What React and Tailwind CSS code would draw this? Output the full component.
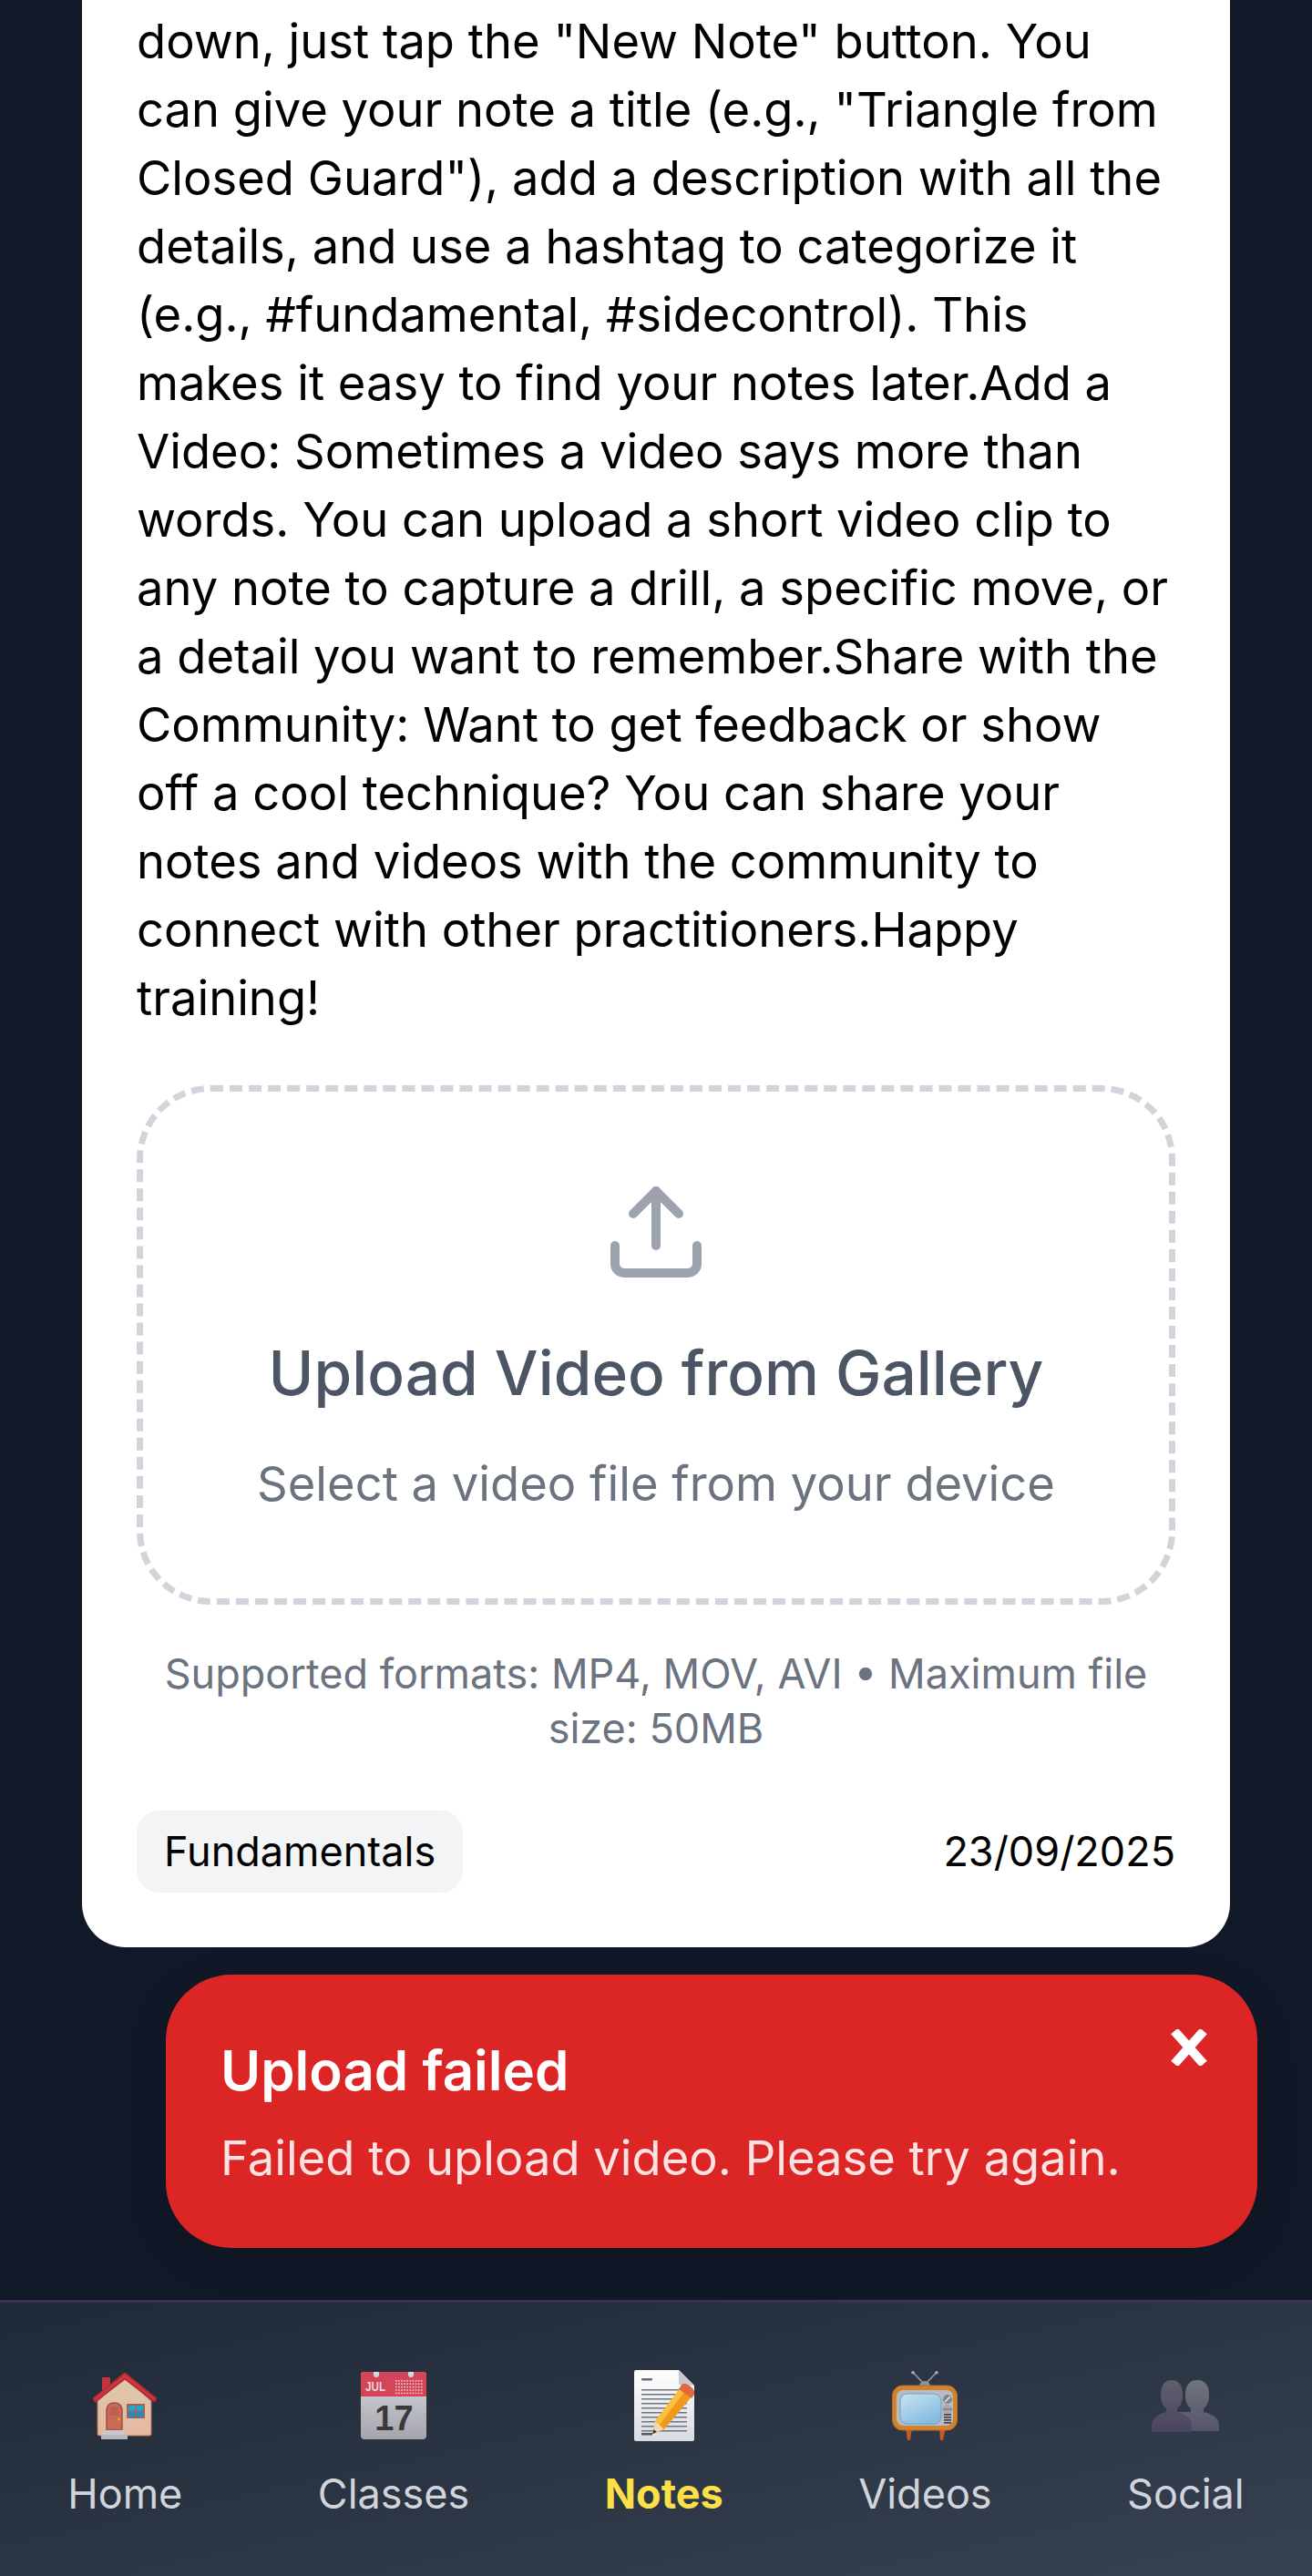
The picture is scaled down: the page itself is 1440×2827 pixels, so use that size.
const bodyText = `down, just tap the "New Note" button. You can give your note a title (e.g., "Triangle from Closed Guard"), add a description with all the details, and use a hashtag to categorize it (e.g., #fundamental, #sidecontrol). This makes it easy to find your notes later.Add a Video: Sometimes a video says more than words. You can upload a short video clip to any note to capture a drill, a specific move, or a detail you want to remember.Share with the Community: Want to get feedback or show off a cool technique? You can share your notes and videos with the community to connect with other practitioners.Happy training!`

function HomeIcon() {
  return (
    <svg viewBox="0 0 72 74" className="h-[74px] w-[72px]">
      <defs>
        <linearGradient id="houseWall" x1="0" y1="0" x2="0" y2="1">
          <stop offset="0" stopColor="#dcc9ae" />
          <stop offset="1" stopColor="#e6b8a0" />
        </linearGradient>
      </defs>
      <rect x="11" y="6" width="9" height="16" fill="#c4343e" />
      <path d="M6 32 L36 6 L65 32 V68 Q65 70 63 70 H8 Q6 70 6 68Z" fill="url(#houseWall)" stroke="#b5704f" strokeWidth="1" />
      <path d="M2 29 L36 1.5 L70 29 L68.5 32.5 L36 7.5 L3.5 32.5Z" fill="#cf3a42" stroke="#b92a33" strokeWidth="2" strokeLinejoin="round" />
      <path d="M16 64 V43 Q16 34 24.5 34 Q33 34 33 43 V64Z" fill="#c86a58" stroke="#a34e42" strokeWidth="1.5" />
      <path d="M19.5 48 V43 Q19.5 38 24.5 38 Q29.5 38 29.5 43 V48Z" fill="#bd5e4f" />
      <circle cx="29.5" cy="52" r="1.7" fill="#e6a020" />
      <rect x="38" y="35" width="20" height="16" fill="#a0635c" />
      <rect x="40" y="37" width="7.5" height="5.5" fill="#1ea8d4" />
      <rect x="49" y="37" width="7" height="5.5" fill="#1ea8d4" />
      <rect x="40" y="44" width="7.5" height="5.5" fill="#1a8fc4" />
      <rect x="49" y="44" width="7" height="5.5" fill="#1a8fc4" />
      <rect x="12" y="64" width="24" height="5" fill="#c8c8cc" />
      <rect x="10" y="69" width="29" height="5" fill="#b8b8be" />
    </svg>
  )
}

function CalendarIcon() {
  return (
    <svg viewBox="0 0 72 74" className="h-[74px] w-[72px]">
      <defs>
        <linearGradient id="calBody" x1="0" y1="0" x2="0" y2="1">
          <stop offset="0" stopColor="#d8d8dc" />
          <stop offset="1" stopColor="#a3a4ad" />
        </linearGradient>
      </defs>
      <rect x="0" y="0" width="72" height="74" rx="4" fill="url(#calBody)" />
      <path d="M0 27 V4 Q0 0 4 0 H14 V3 Q14 6 17 6 Q20 6 20 3 V0 H52 V3 Q52 6 55 6 Q58 6 58 3 V0 H68 Q72 0 72 4 V27Z" fill="#d5455a" />
      <text x="5" y="21" fontFamily="Liberation Sans" fontSize="14" fontWeight="700" fill="#f3d3d8" textLength="22" lengthAdjust="spacingAndGlyphs">JUL</text>
      {[0, 1, 2, 3, 4].map((row) =>
        [0, 1, 2, 3, 4, 5, 6, 7, 8, 9].map((col) => (
          <rect key={`${row}-${col}`} x={38 + col * 3.1} y={9 + row * 3.4} width="1.6" height="1.6" fill="#f1c9d0" />
        ))
      )}
      <text x="36.5" y="64" textAnchor="middle" fontFamily="Liberation Sans" fontSize="38" fontWeight="700" fill="#3a3a3c">17</text>
    </svg>
  )
}

function NoteIcon() {
  return (
    <svg viewBox="0 0 66 78" className="h-[78px] w-[66px]">
      <defs>
        <linearGradient id="notePage" x1="0" y1="0" x2="0" y2="1">
          <stop offset="0" stopColor="#ffffff" />
          <stop offset="1" stopColor="#d9dbe3" />
        </linearGradient>
      </defs>
      <path d="M2 0 H49 L66 17 V76 Q66 78 64 78 H2 Q0 78 0 76 V2 Q0 0 2 0Z" fill="url(#notePage)" />
      <path d="M49 0 L66 17 H52 Q49 17 49 14Z" fill="#c8cad2" />
      <rect x="8" y="9" width="12" height="2.5" rx="1" fill="#6a6c76" />
      {[21, 26, 31, 36, 41, 46, 51, 56, 61, 66].map((y) => (
        <rect key={y} x="8" y={y} width="50" height="1.5" fill="#71737d" />
      ))}
      <rect x="8" y="69" width="12" height="2.5" fill="#55575f" />
      <path d="M52 18 L65 27 L33 65 L20 70 L23 56Z" fill="#f0991c" />
      <path d="M52 18 L57 21.5 L28 60 L23 56Z" fill="#fbc13c" />
      <path d="M53 15 Q57 14 63 19 Q67 22 66 27 L63 31 L49 21Z" fill="#e4683f" />
      <path d="M23 56 L33 65 L20 70Z" fill="#f6d8ac" />
      <path d="M21.5 65 L25 68 L20 70Z" fill="#33333a" />
    </svg>
  )
}

function TvIcon() {
  return (
    <svg viewBox="0 0 72 76" className="h-[76px] w-[72px]">
      <defs>
        <linearGradient id="tvScreen" x1="0" y1="0" x2="0.6" y2="1">
          <stop offset="0" stopColor="#cbe3ee" />
          <stop offset="1" stopColor="#84bce2" />
        </linearGradient>
      </defs>
      <path d="M23 1.5 L34 13 M49 1.5 L38 13" stroke="#94979d" strokeWidth="1.8" />
      <circle cx="23" cy="1.8" r="1.8" fill="#a9acb1" />
      <circle cx="49" cy="1.8" r="1.8" fill="#a9acb1" />
      <path d="M30 16 Q31 11 36 11 Q41 11 42 16Z" fill="#8d9096" />
      <path d="M15 62 H22 L20 76 H17Z" fill="#c55a22" />
      <path d="M52 62 H59 L56 76 H53Z" fill="#c55a22" />
      <rect x="0.5" y="16" width="71" height="49" rx="11" fill="#d1822f" stroke="#b96c27" strokeWidth="1" />
      <rect x="5" y="21" width="62" height="39" rx="7" fill="#b9bbc1" />
      <rect x="9" y="25" width="45" height="33" rx="8" fill="url(#tvScreen)" stroke="#68a4c6" strokeWidth="1" />
      <circle cx="61" cy="31" r="5" fill="#82868c" />
      <path d="M58 34 L64 28" stroke="#e4e5e8" strokeWidth="1.5" />
      <circle cx="61" cy="42" r="5" fill="#a6a9af" />
      <path d="M56 42 H66" stroke="#62656b" strokeWidth="1" />
      {[47, 50, 53, 56].map((y) => (
        <rect key={y} x="57" y={y} width="8" height="1.7" fill="#43454b" />
      ))}
    </svg>
  )
}

function PeopleIcon() {
  return (
    <svg viewBox="0 0 74 57" className="h-[57px] w-[74px]">
      <defs>
        <linearGradient id="backPerson" x1="0" y1="0" x2="0" y2="1">
          <stop offset="0" stopColor="#71737f" />
          <stop offset="1" stopColor="#555568" />
        </linearGradient>
        <linearGradient id="frontPerson" x1="0" y1="0" x2="0" y2="1">
          <stop offset="0" stopColor="#5f606c" />
          <stop offset="1" stopColor="#4a4460" />
        </linearGradient>
      </defs>
      <g fill="url(#backPerson)">
        <path d="M50 0 Q63 0 63 17 Q63 27 57 31 V35 Q74 39 74 50 V56 H30 V35 H43 V31 Q37 27 37 17 Q37 0 50 0Z" />
      </g>
      <g fill="url(#frontPerson)">
        <path d="M22 0 Q34 0 34 17 Q34 27 28 31 V35 Q44 39 44 50 V55 Q44 57 42 57 H0 V50 Q0 39 16 35 V31 Q10 27 10 17 Q10 0 22 0Z" />
      </g>
    </svg>
  )
}

function NavItem({ icon, label, active }) {
  return (
    <div className="flex flex-col items-center">
      <div className="flex h-[80px] items-center justify-center">{icon}</div>
      <span className={`mt-[25px] text-[45px] leading-[63px] ${active ? 'font-bold text-[#fde047]' : 'text-[#d1d5db]'}`}>{label}</span>
    </div>
  )
}

export default function App() {
  return (
    <div className="relative flex h-[2827px] flex-col overflow-hidden bg-[#111827] font-['Inter',sans-serif]">
      <div className="mx-[90px] rounded-b-[48px] bg-white px-[60px] pt-[8px] pb-[60px]">
        <p className="text-[52.5px] leading-[75px] text-black">{bodyText}</p>

        <div className="mt-[58px] flex flex-col items-center rounded-[81px] border-[7px] border-dashed border-[#d1d5db] pt-[94px] pb-[90px]">
          <svg viewBox="0 0 24 24" className="h-[120px] w-[120px] text-[#9ca3af]" fill="none" stroke="currentColor" strokeWidth="2" strokeLinecap="round" strokeLinejoin="round">
            <path d="M21 15v4a2 2 0 0 1-2 2H5a2 2 0 0 1-2-2v-4" />
            <path d="M17 8l-5-5-5 5" />
            <path d="M12 3v12" />
          </svg>
          <h3 className="mt-[53px] text-[67.5px] leading-[84px] font-medium text-[#4b5563]">Upload Video from Gallery</h3>
          <p className="mt-[43px] text-[52.5px] leading-[72px] text-[#6b7280]">Select a video file from your device</p>
        </div>

        <p className="mt-[46px] text-center text-[45px] leading-[60px] text-[#6b7280]">Supported formats: MP4, MOV, AVI • Maximum file size: 50MB</p>

        <div className="mt-[60px] flex items-center justify-between">
          <span className="rounded-[24px] bg-[#f3f4f6] px-[30px] py-[21px] text-[45px] leading-[48px] text-black">Fundamentals</span>
          <span className="text-[45px] leading-[60px] text-black">23/09/2025</span>
        </div>
      </div>

      {/* toast sits above the page */}
      <div className="absolute top-[2167px] right-[60px] left-[182px] rounded-[72px] bg-[#dc2626] px-[60px] pt-[69px] pb-[63px] shadow-[0_12px_45px_rgba(0,0,0,0.12)]">
        <h4 className="text-[60px] leading-[72px] font-semibold text-white">Upload failed</h4>
        <p className="mt-[24px] text-[52.5px] leading-[72px] text-[#fee2e2]">Failed to upload video. Please try again.</p>
        <svg viewBox="0 0 20 20" className="absolute top-[60px] right-[55px] h-[40px] w-[40px]" fill="none" stroke="white" strokeWidth="5">
          <path d="M2 1 L18 19 M18 1 L2 19" />
        </svg>
      </div>

      <nav className="mt-auto flex h-[303px] justify-around border-t-[3px] border-[#3b3355] bg-gradient-to-br from-[#1f2937] to-[#374151] pt-[73px]">
        <NavItem icon={<HomeIcon />} label="Home" />
        <NavItem icon={<CalendarIcon />} label="Classes" />
        <NavItem icon={<NoteIcon />} label="Notes" active />
        <NavItem icon={<TvIcon />} label="Videos" />
        <NavItem icon={<PeopleIcon />} label="Social" />
      </nav>
    </div>
  )
}
